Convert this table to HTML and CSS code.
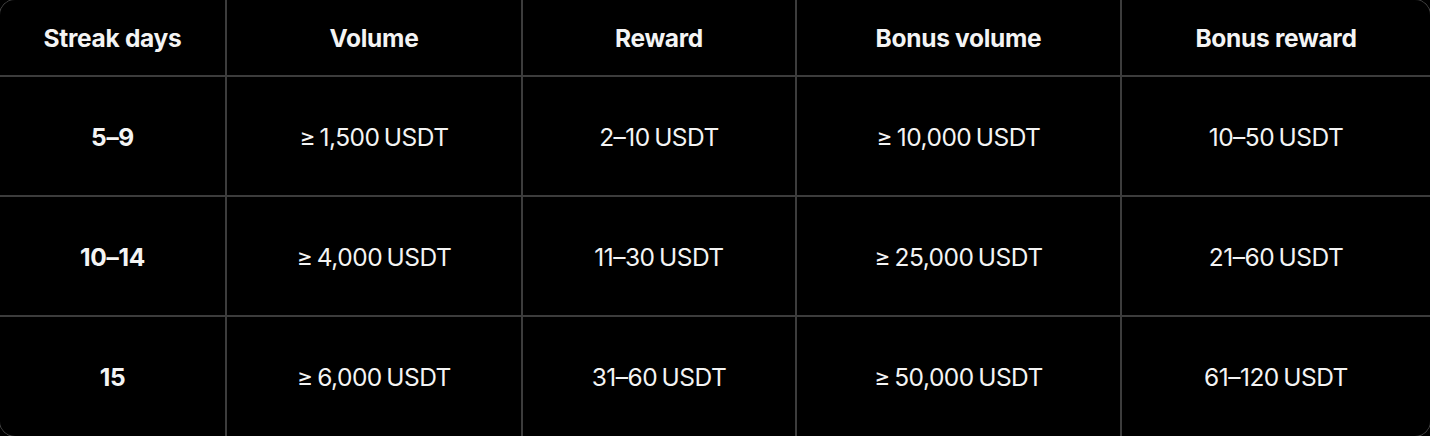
FILE: index.html
```html
<!DOCTYPE html>
<html lang="en">
<head>
<meta charset="utf-8">
<title>Streak rewards</title>
<link rel="stylesheet" href="styles.css">
</head>
<body>
<div class="frame">
  <div class="table">
    <div class="cell head">Streak days</div>
    <div class="cell head">Volume</div>
    <div class="cell head">Reward</div>
    <div class="cell head">Bonus volume</div>
    <div class="cell head">Bonus reward</div>

    <div class="cell key">5–9</div>
    <div class="cell">≥ 1,500 USDT</div>
    <div class="cell">2–10 USDT</div>
    <div class="cell">≥ 10,000 USDT</div>
    <div class="cell">10–50 USDT</div>

    <div class="cell key">10–14</div>
    <div class="cell">≥ 4,000 USDT</div>
    <div class="cell">11–30 USDT</div>
    <div class="cell">≥ 25,000 USDT</div>
    <div class="cell">21–60 USDT</div>

    <div class="cell key">15</div>
    <div class="cell">≥ 6,000 USDT</div>
    <div class="cell">31–60 USDT</div>
    <div class="cell">≥ 50,000 USDT</div>
    <div class="cell">61–120 USDT</div>
  </div>
</div>
</body>
</html>
```

FILE: styles.css
```css
html, body {
  margin: 0;
  padding: 0;
  background: #000;
  overflow: hidden;
}

.frame {
  margin: -1px;
  width: 1430px;
  height: 436px;
  border: 1px solid #4a4a4a;
  border-radius: 16px;
  overflow: hidden;
  background: #000;
}

.table {
  display: grid;
  grid-template-columns: 225px 294px 272px 323px 1fr;
  grid-template-rows: 75px 118px 118px 1fr;
  gap: 2px;
  height: 100%;
  background: #3c3c3c;
}

.cell {
  background: #000;
  display: flex;
  align-items: center;
  justify-content: center;
  padding-top: 1px;
  font-family: Inter, "Noto Sans", sans-serif;
  font-size: 24.5px;
  font-weight: 400;
  letter-spacing: -0.5px;
  word-spacing: -2px;
  color: #f4f4f4;
}

.head,
.key {
  font-weight: 700;
  letter-spacing: -0.3px;
  word-spacing: 0;
}
```
